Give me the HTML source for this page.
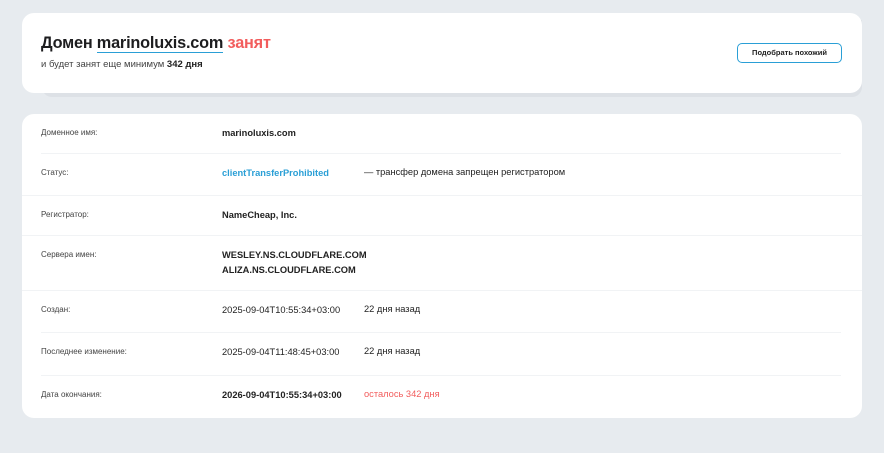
<!DOCTYPE html>
<html><head><meta charset="utf-8"><style>
*{margin:0;padding:0;box-sizing:border-box}
body{width:884px;height:453px;background:#e7ebef;font-family:"Liberation Sans","DejaVu Sans",sans-serif;color:#222;position:relative;overflow:hidden}
.sh{position:absolute;left:42px;top:20px;width:820px;height:77px;background:#dde1e6;border-radius:0 0 10px 10px}
.c1{position:absolute;left:22px;top:13px;width:840px;height:80px;background:#fff;border-radius:12px}
.t{position:absolute;left:19px;top:21px;font-size:16.3px;font-weight:bold;color:#1d1d1f;letter-spacing:-0.2px}
.t u{text-decoration:none;border-bottom:1px solid #2a9fd6}
.t span{color:#f25d5d}
.s{position:absolute;left:19px;top:46px;font-size:9.5px;color:#444}
.s b{color:#222}
.btn{position:absolute;left:715px;top:30px;width:105px;height:20px;border:1px solid #2a9fd6;border-radius:5px;font-size:7.5px;font-weight:bold;text-align:center;line-height:18px;color:#222}
.c2{position:absolute;left:22px;top:114px;width:840px;height:304px;background:#fff;border-radius:12px}
.r{position:absolute;left:19px;width:800px;border-bottom:1px solid #f1f3f5}
.l{position:absolute;left:19px;font-size:8px;color:#444}
.v{position:absolute;left:200px;font-size:9.3px;font-weight:bold;color:#222;line-height:15px}
.n{font-weight:normal}
.x{position:absolute;left:342px;font-size:9.3px;color:#222}
</style></head><body>
<div class="sh"></div>
<div class="c1">
<div class="t">Домен <u>marinoluxis.com</u> <span>занят</span></div>
<div class="s">и будет занят еще минимум <b>342 дня</b></div>
<div class="btn">Подобрать похожий</div>
</div>
<div class="c2">
<div class="r" style="top:0;height:40px"></div>
<div class="r" style="top:40px;height:42px;left:0;width:840px"></div>
<div class="r" style="top:82px;height:40px;left:0;width:840px"></div>
<div class="r" style="top:122px;height:55px;left:0;width:840px"></div>
<div class="r" style="top:177px;height:42px"></div>
<div class="r" style="top:219px;height:43px"></div>

<div class="l" style="top:14px">Доменное имя:</div><div class="v" style="top:12px">marinoluxis.com</div>
<div class="l" style="top:54px">Статус:</div><div class="v" style="top:52px;color:#2a9fd6">clientTransferProhibited</div><div class="x" style="top:53px">— трансфер домена запрещен регистратором</div>
<div class="l" style="top:96px">Регистратор:</div><div class="v" style="top:94px">NameCheap, Inc.</div>
<div class="l" style="top:136px">Сервера имен:</div><div class="v" style="top:134px">WESLEY.NS.CLOUDFLARE.COM<br>ALIZA.NS.CLOUDFLARE.COM</div>
<div class="l" style="top:191px">Создан:</div><div class="v n" style="top:189px">2025-09-04T10:55:34+03:00</div><div class="x" style="top:190px">22 дня назад</div>
<div class="l" style="top:233px">Последнее изменение:</div><div class="v n" style="top:231px">2025-09-04T11:48:45+03:00</div><div class="x" style="top:232px">22 дня назад</div>
<div class="l" style="top:276px">Дата окончания:</div><div class="v" style="top:274px">2026-09-04T10:55:34+03:00</div><div class="x" style="top:275px;color:#f25d5d">осталось 342 дня</div>
</div>
</body></html>
